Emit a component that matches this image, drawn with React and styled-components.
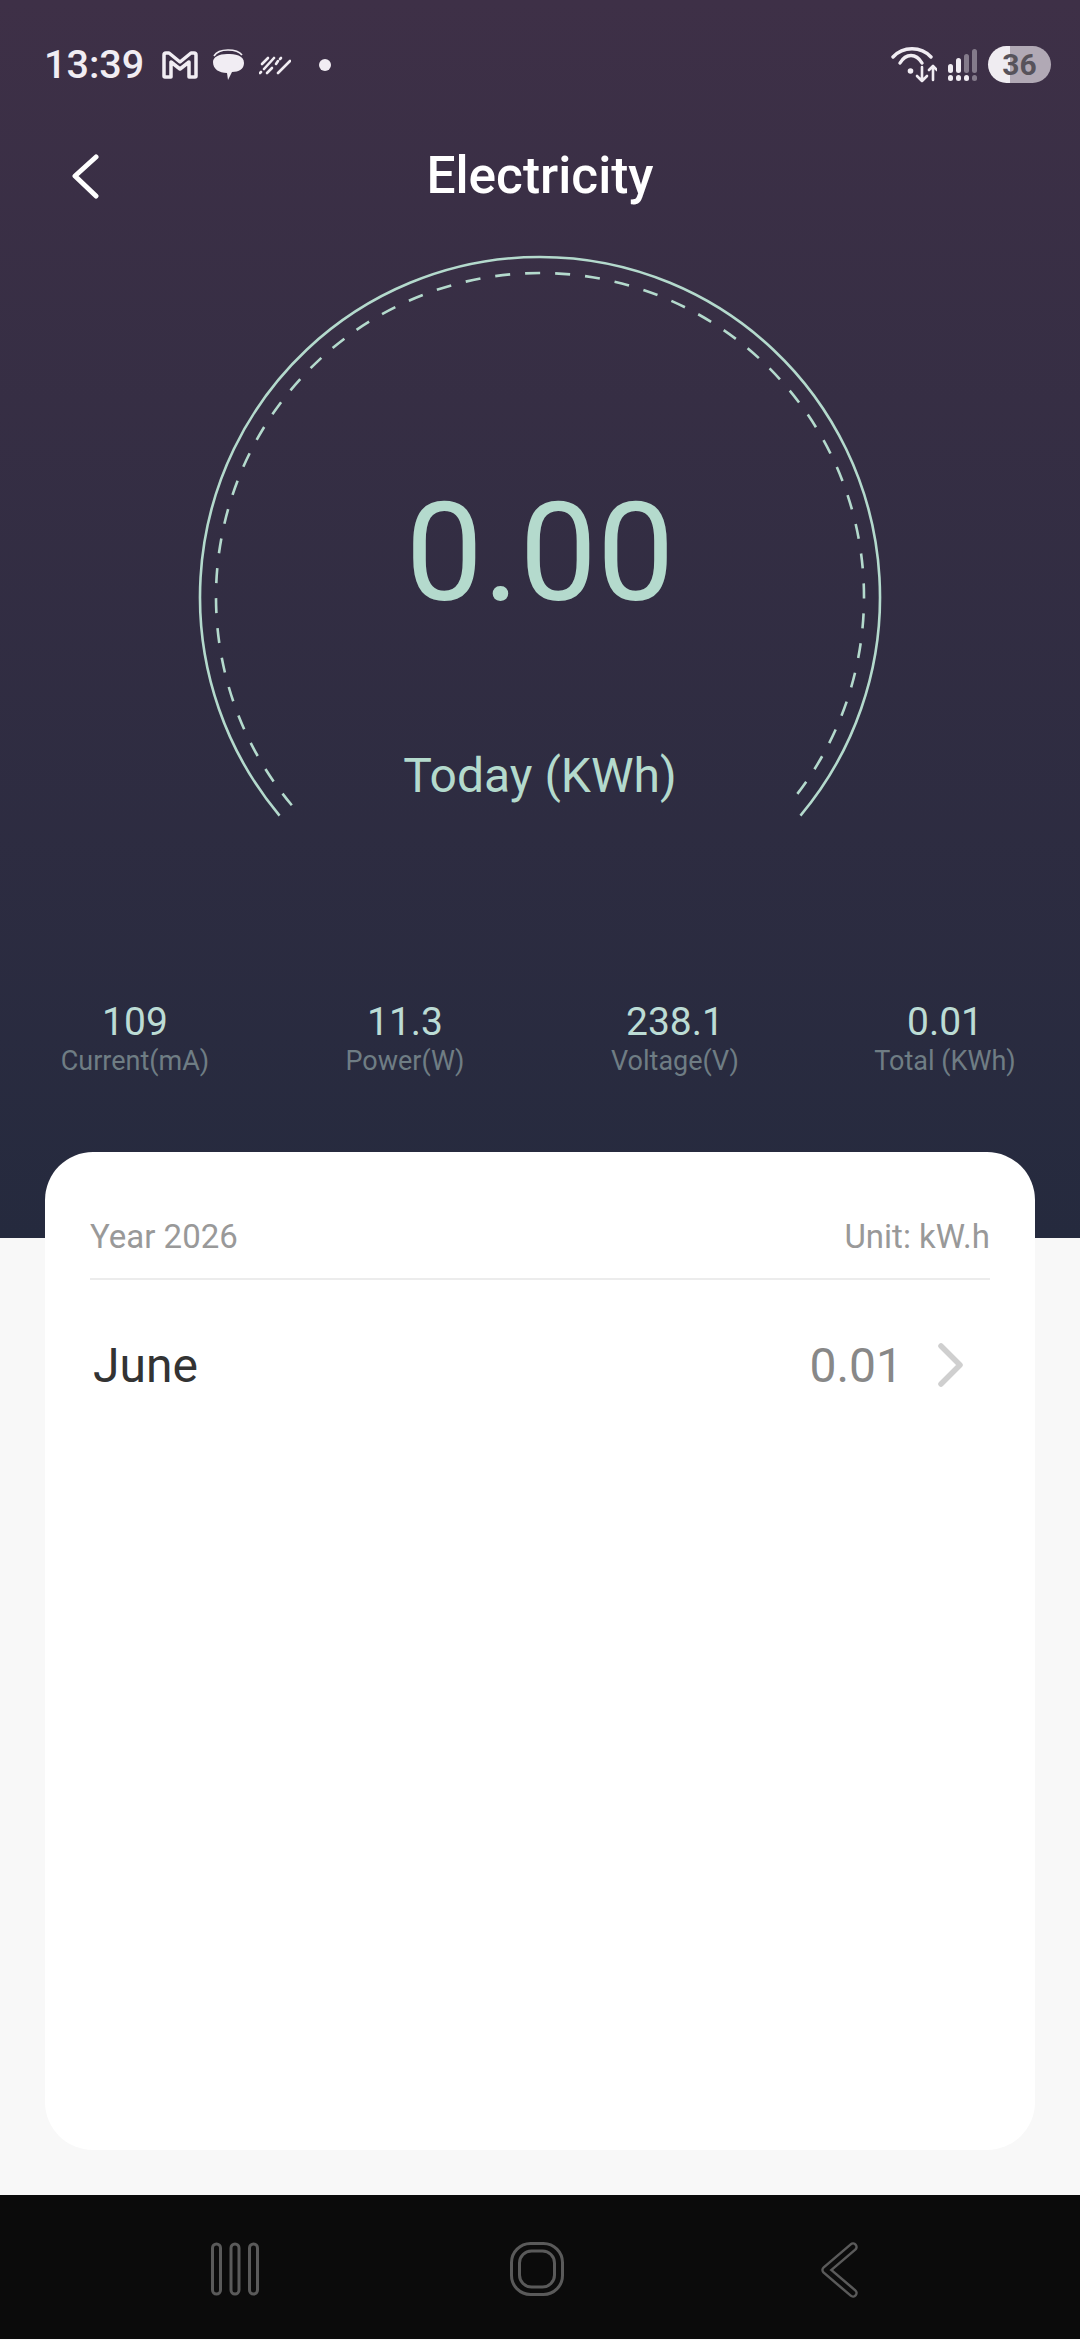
import React from 'react';
import styled, { createGlobalStyle } from 'styled-components';

const GlobalStyle = createGlobalStyle`
  html, body {
    margin: 0;
    padding: 0;
    background: #f8f8f8;
    font-family: Roboto, "Liberation Sans", sans-serif;
  }
`;

const Screen = styled.div`
  width: 1080px;
  height: 2340px;
  display: flex;
  flex-direction: column;
  overflow: hidden;
  background: #f8f8f8;
`;

const Hero = styled.header`
  height: 1238px;
  flex: none;
  display: flex;
  flex-direction: column;
  background: linear-gradient(180deg, #3e3047 0%, #252a3e 100%);
`;

const StatusBar = styled.div`
  height: 130px;
  flex: none;
  box-sizing: border-box;
  padding: 46px 29px 0 44px;
  display: flex;
  justify-content: space-between;
  align-items: flex-start;
  color: #f1edf3;
`;

const StatusGroup = styled.div`
  display: flex;
  align-items: center;
  height: 37px;
`;

const Clock = styled.span`
  font-size: 39.5px;
  font-weight: 500;
  line-height: 37px;
  margin-right: 18px;
`;

const StatusIcon = styled.svg`
  display: block;
  flex: none;
  margin-right: ${(p) => p.$gap || 0}px;
`;

const Battery = styled.div`
  width: 63px;
  height: 37px;
  border-radius: 19px;
  display: flex;
  align-items: center;
  justify-content: center;
  font-size: 30px;
  font-weight: 700;
  color: #57535b;
  background: linear-gradient(90deg, #efecf1 0 35%, #b1a9b5 35% 100%);
`;

const TitleRow = styled.div`
  height: 90px;
  flex: none;
  position: relative;
  display: flex;
  align-items: center;
  justify-content: center;
`;

const Title = styled.h1`
  margin: 0;
  color: #ffffff;
  font-size: 51.4px;
  font-weight: 500;
`;

const BackButton = styled.svg`
  position: absolute;
  left: 70px;
  top: 23px;
`;

const Gauge = styled.section`
  position: relative;
  flex: none;
  width: 700px;
  height: 610px;
  margin: 30px auto 0;
  display: flex;
  flex-direction: column;
  align-items: center;
  color: #b4dacd;
`;

const GaugeArc = styled.svg`
  position: absolute;
  left: 0;
  top: 0;
`;

const Reading = styled.div`
  margin-top: 223px;
  font-size: 138px;
  font-weight: 400;
  line-height: 160px;
`;

const ReadingLabel = styled.div`
  margin-top: 113px;
  font-size: 48px;
  line-height: 60px;
`;

const Stats = styled.div`
  margin-top: 139px;
  display: grid;
  grid-template-columns: repeat(4, 270px);
`;

const Stat = styled.div`
  display: flex;
  flex-direction: column;
  align-items: center;
`;

const StatValue = styled.span`
  font-size: 39px;
  line-height: 46px;
  color: #bcdcd5;
`;

const StatLabel = styled.span`
  font-size: 27px;
  line-height: 32px;
  color: #6f7d84;
`;

const Card = styled.main`
  flex: none;
  height: 998px;
  margin: -86px 45px 0;
  box-sizing: border-box;
  padding: 0 45px;
  background: #ffffff;
  border-radius: 48px;
  position: relative;
`;

const CardHead = styled.div`
  height: 128px;
  box-sizing: border-box;
  padding-top: 63px;
  display: flex;
  justify-content: space-between;
  font-size: 33px;
  line-height: 44px;
  color: #999999;
  border-bottom: 2px solid #ececec;
`;

const MonthRow = styled.div`
  height: 170px;
  display: flex;
  align-items: center;
  padding: 0 26px 0 3px;
`;

const MonthName = styled.span`
  flex: 1;
  font-size: 48px;
  color: #333333;
`;

const MonthValue = styled.span`
  font-size: 48px;
  color: #888888;
  margin-right: 35px;
`;

const SystemNav = styled.footer`
  margin-top: 45px;
  height: 144px;
  flex: none;
  box-sizing: border-box;
  padding: 47px 222px 0 211px;
  display: flex;
  justify-content: space-between;
  align-items: flex-start;
  background: #0b0b0b;
`;

const NavIcon = styled.svg`
  display: block;
  margin-right: ${(p) => p.$gap || 0}px;
`;

const stats = [
  { value: '109', label: 'Current(mA)' },
  { value: '11.3', label: 'Power(W)' },
  { value: '238.1', label: 'Voltage(V)' },
  { value: '0.01', label: 'Total (KWh)' },
];

// start/end of the gauge arc, 40deg below the horizontal
const arc = (r) => {
  const cx = 350;
  const cy = 347;
  const a = (40 * Math.PI) / 180;
  const dx = r * Math.cos(a);
  const dy = r * Math.sin(a);
  return `M${cx - dx} ${cy + dy} A${r} ${r} 0 1 1 ${cx + dx} ${cy + dy}`;
};

const App = () => {
  return (
    <Screen>
      <GlobalStyle />
      <Hero>
        <StatusBar>
          <StatusGroup>
            <Clock>13:39</Clock>
            <StatusIcon $gap={14} width="36" height="28" viewBox="0 0 36 28" fill="none" stroke="currentColor" strokeWidth="3.5" strokeLinejoin="round">
              <path d="M2 4 Q2 2 4 2 L7 2 L18 11 L29 2 L32 2 Q34 2 34 4 L34 25 Q34 26 33 26 L27 26 L27 11 L18 18 L9 11 L9 26 L3 26 Q2 26 2 25 Z" />
            </StatusIcon>
            <StatusIcon $gap={15} width="32" height="32" viewBox="0 0 32 32" fill="currentColor">
              <path d="M15 5 C23 5 32 6 32 14 C32 20 27 23 20 23 L16 31 L15 24 C7 24 1 20 1 13 C1 8 7 5 15 5 Z" />
              <path d="M2 7 C5 2 10 1 16 1 C23 1 27 2 30 6" fill="none" stroke="currentColor" strokeWidth="1.6" />
            </StatusIcon>
            <StatusIcon $gap={28} width="32" height="20" viewBox="0 0 32 20" fill="none" stroke="currentColor" strokeWidth="2.6" strokeLinecap="round">
              <path d="M3 9 L9 3" />
              <path d="M1 18 L2 17 M5 14 L15 3" />
              <path d="M8 18 L13 13 M17 9 L19 6 M21 4 L22 3" />
              <path d="M19 18 L31 6" />
            </StatusIcon>
            <StatusIcon width="12" height="12" viewBox="0 0 12 12" fill="currentColor">
              <circle cx="6" cy="6" r="6" />
            </StatusIcon>
          </StatusGroup>
          <StatusGroup>
            <StatusIcon $gap={11} width="46" height="36" viewBox="0 0 46 36" fill="none" stroke="currentColor" strokeWidth="3.4" strokeLinecap="round" strokeLinejoin="round">
              <path d="M2 10 C12 -1 30 -1 40 10" />
              <path d="M9 16 C15 6 25 6 31 16" />
              <circle cx="19.500" cy="24" r="2.800" fill="currentColor" stroke="none" />
              <path d="M31 20 V34 M26 29 L31 34 L36 29" strokeWidth="2.600" />
              <path d="M42 33 V19 M38 23 L42 19 L46 23" strokeWidth="2.600" />
            </StatusIcon>
            <StatusIcon $gap={11} width="29" height="32" viewBox="0 0 29 32" fill="currentColor">
              <rect x="0" y="15" width="5" height="9" rx="2.500" />
              <rect x="8" y="9" width="5" height="15" rx="2.500" />
              <rect x="16" y="5" width="5" height="19" rx="2.500" opacity="0.4" />
              <rect x="24" y="0" width="5" height="24" rx="2.500" opacity="0.4" />
              <rect x="0" y="26" width="5" height="6" rx="2.500" />
              <rect x="8" y="26" width="5" height="6" rx="2.500" />
              <rect x="16" y="26" width="5" height="6" rx="2.500" />
              <rect x="24" y="26" width="5" height="6" rx="2.500" opacity="0.4" />
            </StatusIcon>
            <Battery>36</Battery>
          </StatusGroup>
        </StatusBar>

        <TitleRow>
          <BackButton width="30" height="46" viewBox="0 0 30 46" fill="none" stroke="#ffffff" strokeWidth="5" strokeLinecap="round" strokeLinejoin="round">
            <path d="M26 4 L5 23 L26 43" />
          </BackButton>
          <Title>Electricity</Title>
        </TitleRow>

        <Gauge>
          <GaugeArc width="700" height="610" viewBox="0 0 700 610" fill="none" stroke="#b4dacd">
            <path d={arc(340)} strokeWidth="2.600" />
            <path d={arc(324)} strokeWidth="2.600" strokeDasharray="15 15" />
          </GaugeArc>
          <Reading>0.00</Reading>
          <ReadingLabel>Today (KWh)</ReadingLabel>
        </Gauge>

        <Stats>
          {stats.map((s) => (
            <Stat key={s.label}>
              <StatValue>{s.value}</StatValue>
              <StatLabel>{s.label}</StatLabel>
            </Stat>
          ))}
        </Stats>
      </Hero>

      <Card>
        <CardHead>
          <span>Year 2026</span>
          <span>Unit: kW.h</span>
        </CardHead>
        <MonthRow>
          <MonthName>June</MonthName>
          <MonthValue>0.01</MonthValue>
          <svg width="26" height="44" viewBox="0 0 26 44" fill="none" stroke="#cfcfcf" strokeWidth="5.500" strokeLinecap="round" strokeLinejoin="round">
            <path d="M3 3 L22 22 L3 41" />
          </svg>
        </MonthRow>
      </Card>

      <SystemNav>
        <NavIcon width="48" height="54" viewBox="0 0 48 54" fill="none" stroke="#5a5a5a" strokeWidth="3">
          <rect x="1.500" y="2" width="8" height="50" rx="4" />
          <rect x="20" y="2" width="8" height="50" rx="4" />
          <rect x="38.500" y="2" width="8" height="50" rx="4" />
        </NavIcon>
        <NavIcon $gap={5} width="54" height="54" viewBox="0 0 54 54" fill="none" stroke="#5a5a5a" strokeWidth="3">
          <rect x="1.500" y="1.500" width="51" height="51" rx="19" />
          <rect x="9.500" y="9" width="35" height="36" rx="12" />
        </NavIcon>
        <NavIcon width="38" height="56" viewBox="0 0 38 56" fill="none" strokeLinecap="round" strokeLinejoin="round">
          <path d="M33 5 L6 28 L33 51" stroke="#5a5a5a" strokeWidth="9.500" />
          <path d="M33 5 L6 28 L33 51" stroke="#0b0b0b" strokeWidth="4.500" />
        </NavIcon>
      </SystemNav>
    </Screen>
  );
};

export default App;
